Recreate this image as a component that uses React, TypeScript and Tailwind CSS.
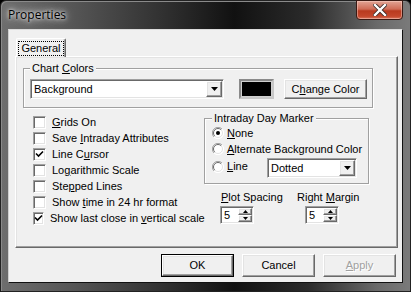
import React from "react";

const raised =
  "border border-t-white border-l-white border-r-[#696969] border-b-[#696969] shadow-[inset_-1px_-1px_0_#a0a0a0,inset_1px_1px_0_#e3e3e3]";
const sunken =
  "border border-t-[#a0a0a0] border-l-[#a0a0a0] border-r-white border-b-white shadow-[inset_1px_1px_0_#696969,inset_-1px_-1px_0_#e3e3e3]";
const etched = "border border-[#a0a0a0] shadow-[1px_1px_0_#fff,inset_1px_1px_0_#fff]";

function U({ children }: { children: React.ReactNode }) {
  return <span className="underline underline-offset-[1px] decoration-1">{children}</span>;
}

function Check({ checked, children }: { checked?: boolean; children: React.ReactNode }) {
  return (
    <div className="flex h-[16px] items-center">
      <div className={`w-[13px] h-[13px] bg-white ${sunken} flex items-center justify-center`}>
        {checked && (
          <svg width="9" height="9" viewBox="0 0 9 9">
            <path d="M1 3.5 L3.5 6 L8 1.5" stroke="#000" strokeWidth="1.6" fill="none" />
          </svg>
        )}
      </div>
      <span className="ml-[6px] leading-[13px] whitespace-nowrap">{children}</span>
    </div>
  );
}

function Radio({ checked }: { checked?: boolean }) {
  return (
    <svg width="12" height="12" viewBox="0 0 12 12" className="shrink-0">
      <circle cx="6" cy="6" r="5.5" fill="#fff" />
      <path d="M10 2 A5.5 5.5 0 0 0 2 10" stroke="#a0a0a0" strokeWidth="1" fill="none" />
      <path d="M9.2 2.8 A4.5 4.5 0 0 0 2.8 9.2" stroke="#696969" strokeWidth="1" fill="none" />
      <path d="M2 10 A5.5 5.5 0 0 0 10 2" stroke="#fff" strokeWidth="1" fill="none" />
      <path d="M2.8 9.2 A4.5 4.5 0 0 0 9.2 2.8" stroke="#e3e3e3" strokeWidth="1" fill="none" />
      {checked && <circle cx="6" cy="6" r="2" fill="#000" />}
    </svg>
  );
}

function DownBtn() {
  return (
    <div className={`w-[16px] h-[16px] bg-[#f0f0f0] ${raised} flex items-center justify-center`}>
      <svg width="7" height="4" viewBox="0 0 7 4">
        <path d="M0 0 H7 L3.5 4 Z" fill="#000" />
      </svg>
    </div>
  );
}

function Combo({ w, text }: { w: string; text: string }) {
  return (
    <div className={`${w} h-[20px] bg-white ${sunken} flex items-center justify-between pl-[3px] pr-[1px]`}>
      <span className="leading-[13px]">{text}</span>
      <DownBtn />
    </div>
  );
}

function Spinner() {
  return (
    <div className={`w-[34px] h-[18px] bg-white ${sunken} flex items-center justify-between pl-[3px] pr-[1px]`}>
      <span className="leading-[13px]">5</span>
      <div className="flex flex-col w-[14px] h-[14px]">
        <div className={`flex-1 bg-[#f0f0f0] ${raised} flex items-center justify-center`}>
          <svg width="5" height="3" viewBox="0 0 5 3">
            <path d="M0 3 H5 L2.5 0 Z" fill="#000" />
          </svg>
        </div>
        <div className={`flex-1 bg-[#f0f0f0] ${raised} flex items-center justify-center`}>
          <svg width="5" height="3" viewBox="0 0 5 3">
            <path d="M0 0 H5 L2.5 3 Z" fill="#000" />
          </svg>
        </div>
      </div>
    </div>
  );
}

function Btn({ children, def, disabled }: { children: React.ReactNode; def?: boolean; disabled?: boolean }) {
  return (
    <div className={`w-[73px] h-[23px] ${def ? "border border-[#000]" : ""}`}>
      <div
        className={`w-full h-full bg-[#f0f0f0] ${raised} flex items-center justify-center ${
          disabled ? "text-[#a0a0a0] [text-shadow:1px_1px_0_#fff]" : "text-black"
        }`}
      >
        {children}
      </div>
    </div>
  );
}

export default function App() {
  return (
    <div className="w-[411px] h-[292px] bg-black font-['Liberation_Sans',Arial,sans-serif] text-[11px] text-black">
      <div className="w-full h-full rounded-t-[6px] border border-[#222] bg-[linear-gradient(90deg,#6e6e6e_0%,#555_18%,#303030_40%,#111_57%,#2b2b2b_75%,#6a6a6a_92%,#7a7a7a_100%)] flex flex-col px-[7px] pb-[8px] shadow-[inset_1px_1px_0_#8a8a8a]">
        {/* Title bar */}
        <div className="h-[28px] flex items-start justify-between">
          <div className="mt-[6px] ml-[0px] text-[12px] font-['Open_Sans',sans-serif] leading-[16px] text-black [text-shadow:0_0_6px_#ddd,0_0_10px_#ccc,0_0_3px_#eee]">
            Properties
          </div>
          <div className="mt-[-1px] w-[47px] h-[20px] rounded-b-[4px] border border-[#3a1a14] bg-[linear-gradient(180deg,#e2a495_0%,#cf6c57_45%,#b93a1f_55%,#c4472c_85%,#d8775f_100%)] shadow-[inset_0_0_0_1px_rgba(255,220,210,0.45)] flex items-center justify-center">
            <svg width="14" height="12" viewBox="0 0 14 12">
              <path d="M2 1 L12 11 M12 1 L2 11" stroke="#3a2a28" strokeWidth="4" strokeLinecap="square" />
              <path d="M2 1 L12 11 M12 1 L2 11" stroke="#fff" strokeWidth="2.4" strokeLinecap="square" />
            </svg>
          </div>
        </div>

        {/* Client area */}
        <div className="flex-1 bg-[#f0f0f0] border border-[#111] border-t-[#dcdcdc] border-l-[#cfcfcf] flex flex-col px-[6px]">
          {/* Tab strip */}
          <div className="h-[26px] flex items-end pl-[1px]">
            <div className="relative z-10 w-[50px] h-[19px] -mb-[1px] bg-[#f0f0f0] border border-b-0 border-t-white border-l-white border-r-[#696969] rounded-t-[2px] shadow-[inset_-1px_0_0_#a0a0a0] flex items-center justify-center">
              <span className="px-[2px] leading-[13px] outline outline-1 outline-dotted outline-black">General</span>
            </div>
          </div>
          {/* Tab page */}
          <div className={`w-[383px] h-[192px] bg-[#f0f0f0] ${raised} pl-[7px] flex flex-col`}>
            {/* Chart Colors group */}
            <div className={`relative mt-[11px] w-[350px] h-[40px] ${etched} pl-[6px] pt-[10px] flex items-start`}>
              <span className="absolute -top-[7px] left-[6px] px-[2px] bg-[#f0f0f0] leading-[13px]">
                Chart <U>C</U>olors
              </span>
              <Combo w="w-[194px]" text="Background" />
              <div className="ml-[15px] w-[35px] h-[20px] border-2 border-[#8a8a8a] border-b-[#c8c8c8] border-r-[#c8c8c8] p-[1px] bg-[#d0d0d0]">
                <div className="w-full h-full bg-black" />
              </div>
              <div className={`ml-[10px] w-[83px] h-[20px] bg-[#f0f0f0] ${raised} flex items-center justify-center`}>
                C<U>h</U>ange Color
              </div>
            </div>

            {/* Lower area */}
            <div className="flex">
              <div className="w-[171px] ml-[10px] mt-[6px] flex flex-col">
                <Check><U>G</U>rids On</Check>
                <Check>Save <U>I</U>ntraday Attributes</Check>
                <Check checked>Line C<U>u</U>rsor</Check>
                <Check>Lo<U>g</U>arithmic Scale</Check>
                <Check>Ste<U>p</U>ped Lines</Check>
                <Check>Show <U>t</U>ime in 24 hr format</Check>
                <Check checked>Show last close in <U>v</U>ertical scale</Check>
              </div>
              <div className="mt-[10px] flex flex-col">
                <div className={`relative w-[165px] h-[66px] ${etched} pl-[7px] pt-[6px] flex flex-col`}>
                  <span className="absolute -top-[7px] left-[7px] px-[2px] bg-[#f0f0f0] leading-[13px]">
                    Intraday Day Marker
                  </span>
                  <div className="h-[16px] flex items-center">
                    <Radio checked />
                    <span className="ml-[3px] leading-[13px]"><U>N</U>one</span>
                  </div>
                  <div className="h-[16px] flex items-center">
                    <Radio />
                    <span className="ml-[3px] leading-[13px]"><U>A</U>lternate Background Color</span>
                  </div>
                  <div className="h-[20px] mt-[1px] flex items-center">
                    <div className="w-[55px] self-start mt-[2px] flex items-center">
                      <Radio />
                      <span className="ml-[3px] leading-[13px]"><U>L</U>ine</span>
                    </div>
                    <Combo w="w-[90px]" text="Dotted" />
                  </div>
                </div>
                <div className="flex mt-[7px] pl-[16px]">
                  <div className="w-[77px] flex flex-col">
                    <span className="leading-[13px] pl-[1px]"><U>P</U>lot Spacing</span>
                    <div className="mt-[2px]"><Spinner /></div>
                  </div>
                  <div className="flex flex-col">
                    <span className="leading-[13px]">Right <U>M</U>argin</span>
                    <div className="mt-[2px] ml-[8px]"><Spinner /></div>
                  </div>
                </div>
              </div>
            </div>
          </div>

          {/* Buttons */}
          <div className="mt-[6px] flex justify-end gap-[8px]">
            <Btn def>OK</Btn>
            <Btn>Cancel</Btn>
            <Btn disabled><U>A</U>pply</Btn>
          </div>
        </div>
      </div>
    </div>
  );
}
